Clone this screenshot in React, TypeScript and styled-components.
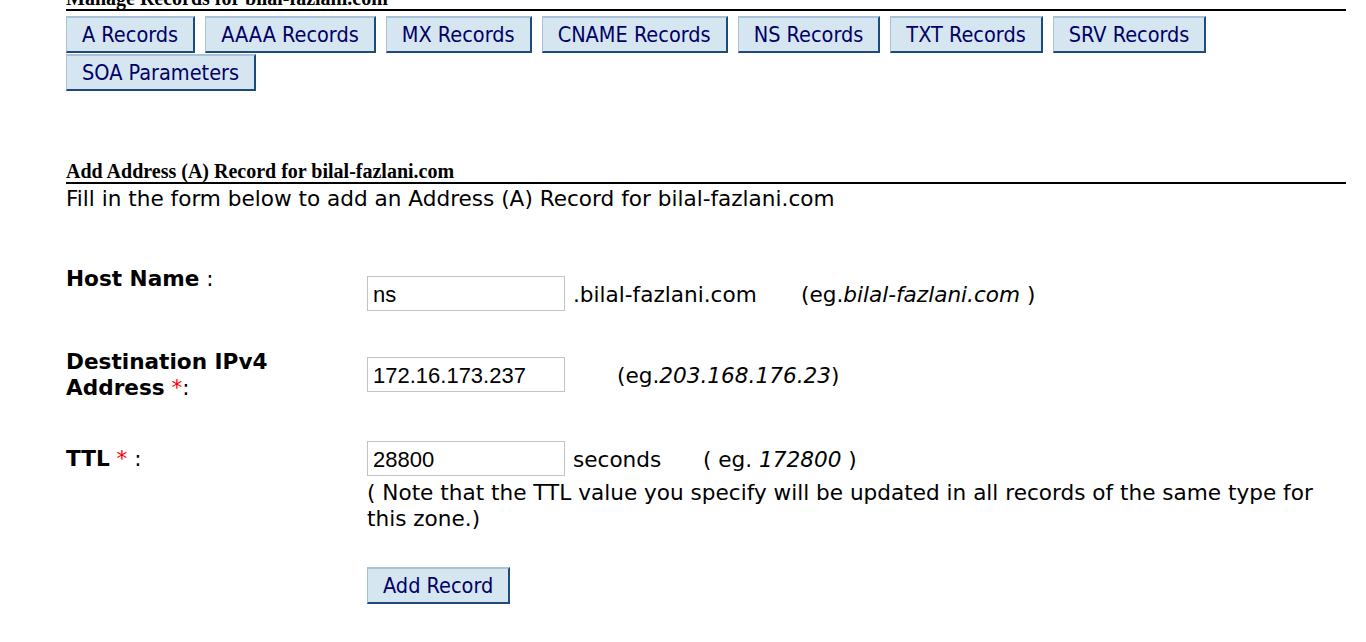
import React from 'react';
import styled, { createGlobalStyle } from 'styled-components';

const GlobalStyle = createGlobalStyle`
    html, body {
        margin: 0;
        padding: 0;
        background: #ffffff;
    }
    body {
        font-family: 'DejaVu Sans', Verdana, sans-serif;
        color: #000000;
    }
`;

const Page = styled.div`
    width: 1280px;
    margin: -13px 0 0 66px;
`;

const SectionTitle = styled.h3<{ $gap?: number }>`
    margin: ${(p) => p.$gap || 0}px 0 0 0;
    font-family: 'Liberation Serif', 'Times New Roman', serif;
    font-size: 20px;
    font-weight: bold;
    line-height: 22px;
    border-bottom: 2px solid #000000;
`;

const TabBar = styled.div`
    display: flex;
    flex-wrap: wrap;
    column-gap: 10px;
    row-gap: 1px;
    margin-top: 5px;
`;

const TabButton = styled.button`
    font-family: 'DejaVu Sans Condensed', Tahoma, sans-serif;
    font-size: 21.5px;
    line-height: 33px;
    color: #000066;
    background: #d6e6f1;
    padding: 0 15px;
    border-style: solid;
    border-width: 2px 2px 2px 1px;
    border-color: #a9c1d6 #1c4b7c #1c4b7c #a9c1d6;
    border-radius: 0;
    cursor: pointer;
`;

const Intro = styled.p`
    margin: 2px 0 0;
    font-size: 21.6px;
    line-height: 26px;
`;

const FormRow = styled.div<{ $gap: number }>`
    display: grid;
    grid-template-columns: 301px 1fr;
    align-items: start;
    margin-top: ${(p) => p.$gap}px;
`;

const Label = styled.div<{ $offset?: number }>`
    font-size: 21.6px;
    line-height: 26px;
    padding-top: ${(p) => p.$offset || 0}px;
`;

const Required = styled.span`
    color: #ff0000;
`;

const FieldCell = styled.div<{ $offset?: number }>`
    padding-top: ${(p) => p.$offset || 0}px;
    font-size: 21.6px;
    line-height: 26px;
`;

const FieldLine = styled.div`
    display: flex;
    align-items: center;
    height: 35px;
`;

const TextInput = styled.input`
    box-sizing: border-box;
    width: 198px;
    height: 35px;
    margin: 0;
    padding: 2px 5px 0;
    font-family: 'Liberation Sans', Arial, sans-serif;
    font-size: 22px;
    color: #000000;
    border: 1px solid #c3c3c3;
    border-radius: 0;
    outline: none;
`;

const Suffix = styled.span<{ $width: number }>`
    display: inline-block;
    width: ${(p) => p.$width}px;
    padding-left: 8px;
    box-sizing: border-box;
    padding-top: 2px;
    white-space: nowrap;
`;

const Hint = styled.span`
    padding-top: 2px;
    white-space: nowrap;
`;

const Note = styled.div`
    margin-top: 4px;
`;

const SubmitRow = styled.div`
    margin: 35px 0 0 301px;
`;

const tabs = [
    'A Records',
    'AAAA Records',
    'MX Records',
    'CNAME Records',
    'NS Records',
    'TXT Records',
    'SRV Records',
    'SOA Parameters',
];

const App: React.FC = () => {
    return (
        <>
            <GlobalStyle />
            <Page>
                <SectionTitle>Manage Records for bilal-fazlani.com</SectionTitle>
                <TabBar>
                    {tabs.map((tab) => (
                        <TabButton key={tab}>{tab}</TabButton>
                    ))}
                </TabBar>

                <SectionTitle $gap={69}>Add Address (A) Record for bilal-fazlani.com</SectionTitle>
                <Intro>Fill in the form below to add an Address (A) Record for bilal-fazlani.com</Intro>

                <FormRow $gap={54}>
                    <Label>
                        <b>Host Name</b> :
                    </Label>
                    <FieldCell $offset={10}>
                        <FieldLine>
                            <TextInput defaultValue="ns" />
                            <Suffix $width={236}>.bilal-fazlani.com</Suffix>
                            <Hint>
                                (eg.<i>bilal-fazlani.com</i> )
                            </Hint>
                        </FieldLine>
                    </FieldCell>
                </FormRow>

                <FormRow $gap={38}>
                    <Label>
                        <b>Destination IPv4</b>
                        <br />
                        <b>Address</b> <Required>*</Required>:
                    </Label>
                    <FieldCell $offset={8}>
                        <FieldLine>
                            <TextInput defaultValue="172.16.173.237" />
                            <Suffix $width={52}></Suffix>
                            <Hint>
                                (eg.<i>203.168.176.23</i>)
                            </Hint>
                        </FieldLine>
                    </FieldCell>
                </FormRow>

                <FormRow $gap={40}>
                    <Label $offset={5}>
                        <b>TTL</b> <Required>*</Required> :
                    </Label>
                    <FieldCell>
                        <FieldLine>
                            <TextInput defaultValue="28800" />
                            <Suffix $width={138}>seconds</Suffix>
                            <Hint>
                                ( eg. <i>172800</i> )
                            </Hint>
                        </FieldLine>
                        <Note>
                            ( Note that the TTL value you specify will be updated in all records of the same type for
                            this zone.)
                        </Note>
                    </FieldCell>
                </FormRow>

                <SubmitRow>
                    <TabButton>Add Record</TabButton>
                </SubmitRow>
            </Page>
        </>
    );
};

export default App;
